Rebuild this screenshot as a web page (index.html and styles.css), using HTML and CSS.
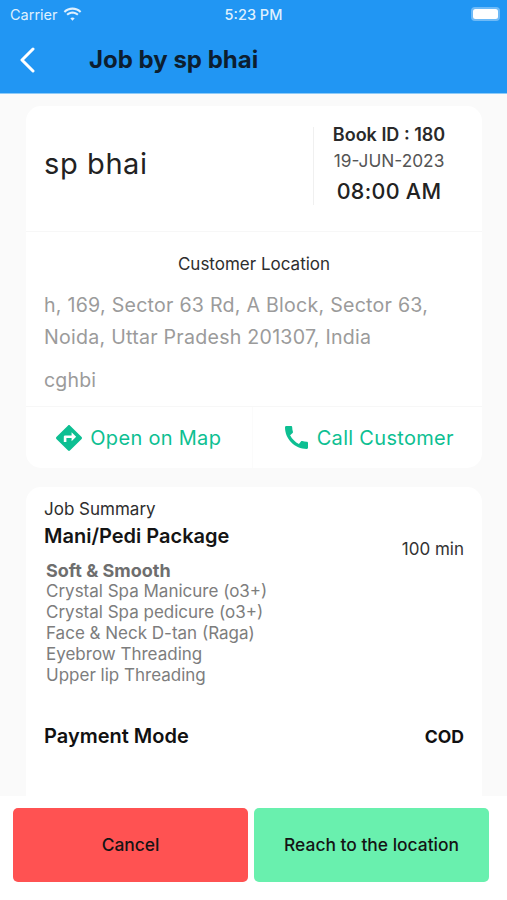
FILE: index.html
```html
<!DOCTYPE html>
<html lang="en">
<head>
<meta charset="utf-8">
<title>Job by sp bhai</title>
<link rel="stylesheet" href="styles.css">
</head>
<body>
<div class="screen">
  <header class="appbar">
    <div class="status">
      <div class="status-left">
        <span>Carrier</span>
        <svg class="wifi" viewBox="0 0 20 14" width="19" height="14"><path fill="#dff0fe" d="M10 2.600c3 0 5.700 1.100 7.800 3l1.500-1.600C16.800 1.600 13.500.2 10 .2S3.200 1.600.7 4l1.500 1.600c2.100-1.900 4.800-3 7.800-3zM10 6.700c1.900 0 3.600.7 4.900 1.900l1.500-1.600C14.700 5.400 12.400 4.400 10 4.400S5.300 5.400 3.600 7l1.500 1.600c1.300-1.200 3-1.900 4.900-1.900zM10 10.700c-.9 0-1.700.3-2.300.9l2.300 2.400 2.300-2.400c-.6-.6-1.400-.9-2.300-.9z"/></svg>
      </div>
      <span class="clock">5:23 PM</span>
      <div class="battery"><span class="battery-fill"></span></div>
    </div>
    <div class="nav">
      <svg class="back" viewBox="0 0 16 26" width="16" height="26"><path d="M14 2 3 13l11 11" fill="none" stroke="#fff" stroke-width="3" stroke-linecap="round" stroke-linejoin="round"/></svg>
      <h1>Job by sp bhai</h1>
    </div>
  </header>

  <main class="content">
    <section class="card top-card">
      <div class="head">
        <div class="name">sp bhai</div>
        <div class="booking">
          <div class="book-id">Book ID : 180</div>
          <div class="date">19-JUN-2023</div>
          <div class="time">08:00 AM</div>
        </div>
      </div>
      <div class="location">
        <div class="loc-title">Customer Location</div>
        <p class="address">h, 169, Sector 63 Rd, A Block, Sector 63, Noida, Uttar Pradesh 201307, India</p>
        <p class="note">cghbi</p>
      </div>
      <div class="actions">
        <div class="action action-map">
          <svg viewBox="2 2 20 20" width="26" height="26"><path fill="#0dbf92" d="M21.710 11.290l-9-9c-.39-.39-1.020-.39-1.410 0l-9 9c-.39.39-.39 1.020 0 1.410l9 9c.39.39 1.020.39 1.410 0l9-9c.39-.38.39-1.010 0-1.410zM14 14.500V12h-4v3H8v-4c0-.55.45-1 1-1h5V7.500l3.500 3.500-3.500 3.500z"/></svg>
          <span>Open on Map</span>
        </div>
        <div class="action action-call">
          <svg viewBox="3 3 18 18" width="23" height="23"><path fill="#0dbf92" d="M20.010 15.380c-1.230 0-2.420-.2-3.530-.56-.35-.12-.74-.03-1.010.24l-1.570 1.970c-2.830-1.350-5.480-3.900-6.890-6.830l1.950-1.660c.27-.28.35-.67.24-1.020-.37-1.110-.56-2.300-.56-3.530 0-.54-.45-.99-.99-.99H4.190C3.650 3 3 3.240 3 3.990 3 13.280 10.730 21 20.010 21c.71 0 .99-.63.99-1.180v-3.450c0-.54-.45-.99-.99-.99z"/></svg>
          <span>Call Customer</span>
        </div>
      </div>
    </section>

    <section class="card summary">
      <div class="sum-label">Job Summary</div>
      <div class="sum-row">
        <div class="package">Mani/Pedi Package</div>
        <div class="duration">100 min</div>
      </div>
      <ul class="services">
        <li class="svc-head">Soft &amp; Smooth</li>
        <li>Crystal Spa Manicure (o3+)</li>
        <li>Crystal Spa pedicure (o3+)</li>
        <li>Face &amp; Neck D-tan (Raga)</li>
        <li>Eyebrow Threading</li>
        <li>Upper lip Threading</li>
      </ul>
      <div class="payment">
        <span class="pay-label">Payment Mode</span>
        <span class="pay-value">COD</span>
      </div>
    </section>
  </main>

  <footer class="footer">
    <button class="btn cancel">Cancel</button>
    <button class="btn reach">Reach to the location</button>
  </footer>
</div>
</body>
</html>
```

FILE: styles.css
```css
* { box-sizing: border-box; }
html, body { margin: 0; padding: 0; }
body { font-family: Inter, "Liberation Sans", sans-serif; background: #fafafa; }
.screen { width: 507px; height: 900px; display: flex; flex-direction: column; overflow: hidden; background: #fafafa; }

.appbar { height: 94px; flex: none; background: #2196f3; border-bottom: 1px solid #8ecbf8; }
.status { height: 28px; padding: 0 5px 0 10px; display: flex; align-items: center; justify-content: space-between; position: relative; color: #dff0fe; font-size: 14.500px; }
.status-left { display: flex; align-items: center; gap: 5px; }
.wifi { margin-top: -1px; margin-left: 0; }
.clock { position: absolute; left: 0; right: 0; text-align: center; font-weight: 500; }
.battery { width: 29px; height: 14px; border-radius: 4px; background: rgba(255,255,255,.35); padding: 2px; margin-right: 2px; }
.battery-fill { display: block; height: 100%; background: #fff; border-radius: 2.500px; }
.nav { height: 65px; display: flex; align-items: center; padding: 0 0 0 19px; }
.back { flex: none; margin-top: -2px; }
.nav h1 { margin: -3px 0 0 54px; font-size: 24px; font-weight: 700; color: #0c1e30; }

.content { flex: 1; min-height: 0; padding: 12px 25px 0 26px; display: flex; flex-direction: column; gap: 19px; overflow: hidden; }
.card { background: #fff; border-radius: 15px; }

.head { height: 126px; display: flex; border-bottom: 1px solid #f7f7f7; padding-top: 22px; }
.name { flex: 1; font-size: 29px; color: #222; padding: 18px 0 0 18px; letter-spacing: .6px; }
.booking { width: 151px; height: 78px; margin-right: 18px; border-left: 1px solid #f0f0f0; text-align: center; color: #222; margin-top: -1px; }
.book-id { font-size: 18px; font-weight: 600; line-height: 22px; margin-top: -3px; color: #2a2a2a; }
.date { font-size: 17.300px; line-height: 22px; margin-top: 4px; color: #555; }
.time { font-size: 21.500px; font-weight: 500; line-height: 26px; margin-top: 6px; letter-spacing: .3px; }

.location { height: 175px; padding: 21px 18px 0; border-bottom: 1px solid #f7f7f7; }
.loc-title { text-align: center; font-size: 17px; line-height: 22px; color: #2e2e2e; }
.address { margin: 14px 0 0; font-size: 19.600px; line-height: 32px; color: #9b9b9b; letter-spacing: .25px; }
.note { margin: 16px 0 0; font-size: 19.500px; line-height: 22px; color: #9b9b9b; letter-spacing: .2px; }

.actions { height: 61px; display: flex; }
.action { flex: 1; display: flex; align-items: center; justify-content: center; gap: 8px; color: #0dbf92; font-size: 20px; letter-spacing: .3px; }
.action span { margin-top: 1px; }
.action-call { gap: 9px; padding-left: 4px; border-left: 1px solid #fbfbfb; }

.summary { flex: 1; padding: 12px 18px 0; border-radius: 15px 15px 0 0; }
.sum-label { font-size: 17px; line-height: 20px; color: #2e2e2e; }
.sum-row { display: flex; justify-content: space-between; }
.package { font-size: 20px; font-weight: 600; line-height: 26px; margin-top: 4px; color: #141414; }
.duration { font-size: 17px; line-height: 22px; color: #333; margin-top: 19px; }
.services { list-style: none; margin: 0 0 0 2px; padding: 0; font-size: 17px; line-height: 21px; color: #7d7d7d; }
.svc-head { font-size: 18px; font-weight: 700; color: #6e6e6e; }
.payment { display: flex; justify-content: space-between; align-items: center; margin-top: 38px; }
.pay-label { font-size: 20px; font-weight: 600; color: #111; }
.pay-value { font-size: 17.600px; font-weight: 700; color: #111; }

.footer { height: 104px; flex: none; background: #fff; padding: 12px 18px 18px 13px; display: flex; gap: 6px; }
.btn { flex: 1; border: 0; border-radius: 5px; font-family: inherit; font-size: 17.400px; font-weight: 500; color: #141414; height: 74px; padding-bottom: 2px; }
.cancel { background: #ff5252; }
.reach { background: #69f0ae; }
```
